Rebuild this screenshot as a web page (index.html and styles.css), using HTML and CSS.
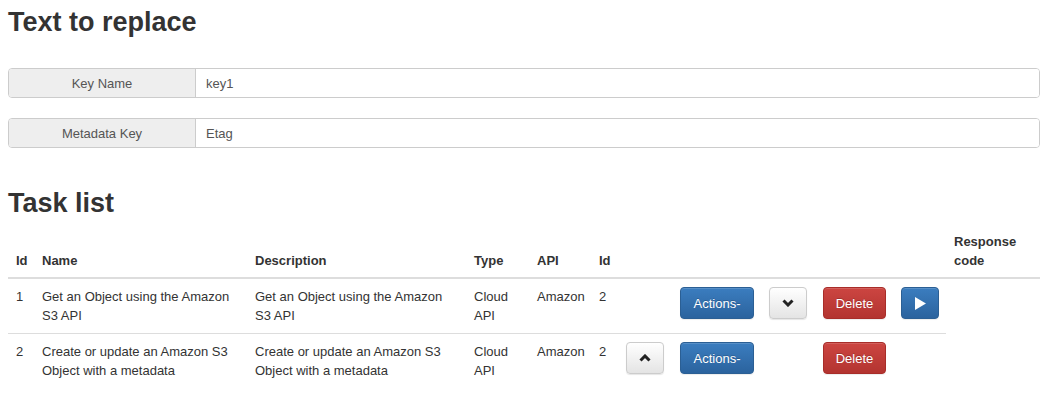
FILE: index.html
```html
<!DOCTYPE html>
<html>
<head>
<meta charset="utf-8">
<link rel="stylesheet" href="styles.css">
</head>
<body>
<div class="page">
  <h2 class="title">Text to replace</h2>
  <div class="input-group">
    <span class="addon">Key Name</span>
    <span class="field">key1</span>
  </div>
  <div class="input-group">
    <span class="addon">Metadata Key</span>
    <span class="field">Etag</span>
  </div>
  <h2 class="title title-tasks">Task list</h2>
  <table class="tasks">
    <colgroup>
      <col class="c-id"><col class="c-name"><col class="c-desc"><col class="c-type"><col class="c-api"><col class="c-id2">
      <col class="c-up"><col class="c-actions"><col class="c-down"><col class="c-delete"><col class="c-play"><col class="c-resp">
    </colgroup>
    <thead>
      <tr>
        <th>Id</th><th>Name</th><th>Description</th><th>Type</th><th>API</th><th>Id</th>
        <th></th><th></th><th></th><th></th><th></th><th>Response code</th>
      </tr>
    </thead>
    <tbody>
      <tr>
        <td>1</td>
        <td>Get an Object using the Amazon S3 API</td>
        <td>Get an Object using the Amazon S3 API</td>
        <td>Cloud API</td>
        <td>Amazon</td>
        <td>2</td>
        <td></td>
        <td><span class="btn btn-primary btn-actions">Actions-</span></td>
        <td><span class="btn btn-default btn-icon"><svg width="12" height="8" viewBox="0 0 12 8"><polyline points="1.5,1.5 6,6 10.5,1.5" fill="none" stroke="#222" stroke-width="3" stroke-linejoin="miter"/></svg></span></td>
        <td><span class="btn btn-danger btn-delete">Delete</span></td>
        <td><span class="btn btn-primary btn-icon"><svg width="11" height="13" viewBox="0 0 11 13"><polygon points="0,0 11,6.5 0,13" fill="#fff"/></svg></span></td>
      </tr>
      <tr>
        <td>2</td>
        <td>Create or update an Amazon S3 Object with a metadata</td>
        <td>Create or update an Amazon S3 Object with a metadata</td>
        <td>Cloud API</td>
        <td>Amazon</td>
        <td>2</td>
        <td><span class="btn btn-default btn-icon"><svg width="12" height="8" viewBox="0 0 12 8"><polyline points="1.5,6.5 6,2 10.5,6.5" fill="none" stroke="#222" stroke-width="3" stroke-linejoin="miter"/></svg></span></td>
        <td><span class="btn btn-primary btn-actions">Actions-</span></td>
        <td></td>
        <td><span class="btn btn-danger btn-delete">Delete</span></td>
        <td></td>
      </tr>
    </tbody>
  </table>
</div>
</body>
</html>
```
FILE: styles.css
```css
html, body {
  margin: 0;
  padding: 0;
  background: #fff;
}
body {
  font-family: "Liberation Sans", Arial, Helvetica, sans-serif;
  font-size: 13px;
  line-height: 19px;
  color: #333;
}
.page {
  padding: 7px 10px 0 8px;
}
.title {
  margin: 0;
  font-size: 27px;
  line-height: 31px;
  font-weight: bold;
  color: #333;
}
.input-group {
  display: flex;
  height: 30px;
  margin-top: 30px;
  border: 1px solid #ccc;
  border-radius: 4px;
  box-sizing: border-box;
  overflow: hidden;
  color: #555;
}
.input-group + .input-group {
  margin-top: 20px;
}
.addon {
  flex: 0 0 186px;
  background: #eee;
  border-right: 1px solid #ccc;
  display: flex;
  align-items: center;
  justify-content: center;
}
.field {
  flex: 1;
  display: flex;
  align-items: center;
  padding-left: 10px;
  background: #fff;
}
.title-tasks {
  margin-top: 40px;
}
.tasks {
  margin-top: 5px;
  width: 1032px;
  table-layout: fixed;
  border-collapse: collapse;
  border-spacing: 0;
}
.c-id { width: 26px; }
.c-name { width: 213px; }
.c-desc { width: 219px; }
.c-type { width: 63px; }
.c-api { width: 62px; }
.c-id2 { width: 27px; }
.c-up { width: 54px; }
.c-actions { width: 89px; }
.c-down { width: 54px; }
.c-delete { width: 78px; }
.c-play { width: 53px; }
.c-resp { width: 94px; }
.tasks th {
  text-align: left;
  vertical-align: bottom;
  padding: 8px 8px 7px 8px;
  font-weight: bold;
  border-bottom: 2px solid #ddd;
}
.tasks td {
  vertical-align: top;
  padding: 8px;
  border-top: 1px solid #ddd;
}
.btn {
  display: inline-flex;
  align-items: center;
  justify-content: center;
  box-sizing: border-box;
  height: 32px;
  border: 1px solid transparent;
  border-radius: 4px;
  font-size: 13px;
  white-space: nowrap;
}
.btn-primary {
  color: #fff;
  background: linear-gradient(to bottom, #3b7dbf 0%, #2b639e 100%);
  border-color: #2b5f94;
  text-shadow: 0 -1px 0 rgba(0,0,0,0.2);
  box-shadow: inset 0 1px 0 rgba(255,255,255,0.15), 0 1px 1px rgba(0,0,0,0.075);
}
.btn-danger {
  color: #fff;
  background: linear-gradient(to bottom, #cc4541 0%, #b33430 100%);
  border-color: #a82d29;
  text-shadow: 0 -1px 0 rgba(0,0,0,0.2);
  box-shadow: inset 0 1px 0 rgba(255,255,255,0.15), 0 1px 1px rgba(0,0,0,0.075);
}
.btn-default {
  background: linear-gradient(to bottom, #ffffff 0%, #e4e4e4 100%);
  border-color: #ccc;
  box-shadow: inset 0 1px 0 rgba(255,255,255,0.15), 0 1px 1px rgba(0,0,0,0.1);
}
.btn-actions { width: 74px; }
.btn-delete { width: 63px; }
.btn-icon { width: 38px; }
```
